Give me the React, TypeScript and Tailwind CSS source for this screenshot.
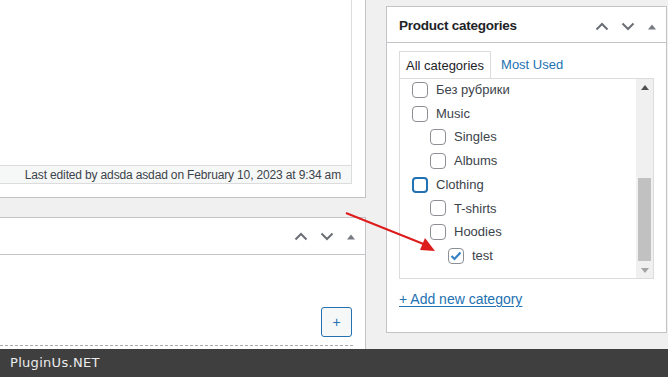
import React from 'react';

const font = { fontFamily: '"Liberation Sans", Arial, sans-serif' };

function Chevron({ down = false }: { down?: boolean }) {
  return (
    <svg width="14" height="9" viewBox="0 0 14 9" className="block">
      <path
        d={down ? 'M1.5 1.5 L7 7 L12.5 1.5' : 'M1.5 7.5 L7 2 L12.5 7.5'}
        fill="none"
        stroke="#6b6f75"
        strokeWidth="2"
      />
    </svg>
  );
}

function Tri() {
  return (
    <svg width="10" height="7" viewBox="0 0 10 7" className="block">
      <path d="M1 6.5 L5 1.5 L9 6.5 Z" fill="#787c82" />
    </svg>
  );
}

function Controls() {
  return (
    <div className="flex items-center gap-[12px]">
      <Chevron />
      <Chevron down />
      <Tri />
    </div>
  );
}

type Cat = { name: string; level: number; focus?: boolean; checked?: boolean };

const cats: Cat[] = [
  { name: 'Без рубрики', level: 0 },
  { name: 'Music', level: 0 },
  { name: 'Singles', level: 1 },
  { name: 'Albums', level: 1 },
  { name: 'Clothing', level: 0, focus: true },
  { name: 'T-shirts', level: 1 },
  { name: 'Hoodies', level: 1 },
  { name: 'test', level: 2, checked: true },
];

const indent = ['pl-[12px]', 'pl-[30px]', 'pl-[48px]'];

function CheckRow({ c }: { c: Cat }) {
  return (
    <div className={`flex items-center h-[23.7px] ${indent[c.level]}`}>
      <span
        className={`w-[16px] h-[16px] rounded-[4px] bg-white flex items-center justify-center shrink-0 ${
          c.focus ? 'border-2 border-[#2271b1]' : 'border border-[#8c8f94]'
        }`}
      >
        {c.checked && (
          <svg width="12" height="10" viewBox="0 0 12 10">
            <path d="M1.5 5 L4.5 8 L10.5 1.5" fill="none" stroke="#3582c4" strokeWidth="2.2" />
          </svg>
        )}
      </span>
      <span className="ml-[8px] text-[13px] text-[#3c434a]">{c.name}</span>
    </div>
  );
}

export default function App() {
  return (
    <div className="relative w-[668px] h-[377px] bg-[#f0f0f1] overflow-hidden flex flex-col" style={font}>
      <div className="flex flex-1 min-h-0">
        {/* Left column */}
        <div className="w-[366px] flex flex-col">
          <div className="bg-white border-r border-b border-[#c3c4c7] pr-[13px] pb-[13px]">
            <div className="h-[184px] border-r border-b border-[#dcdcde] flex flex-col">
              <div className="flex-1" />
              <div className="h-[18px] bg-[#f6f7f7] border-t border-[#dcdcde] flex items-center justify-end pr-[10px] text-[12px] tracking-[-0.15px] whitespace-nowrap text-[#3c434a]">
                Last edited by adsda asdad on February 10, 2023 at 9:34 am
              </div>
            </div>
          </div>

          <div className="mt-[19px] flex-1 bg-white border-t border-r border-[#c3c4c7] flex flex-col">
            <div className="h-[37px] border-b border-[#c3c4c7] flex items-center justify-end pr-[9px]">
              <Controls />
            </div>
            <div className="flex-1 flex flex-col justify-end">
              <div className="flex justify-end pr-[13px] pb-[8px]">
                <div className="w-[31px] h-[30px] rounded-[3px] border border-[#2271b1] bg-[#f6f7f7] flex items-center justify-center text-[#2271b1] text-[14px]">
                  +
                </div>
              </div>
              <div className="w-[353px] border-t border-dashed border-[#a7aaad] mb-[3px]" />
            </div>
          </div>
        </div>

        {/* Right column */}
        <div className="ml-[20px] w-[281px] pt-[6px]">
          <div className="bg-white border border-[#c3c4c7]">
            <div className="h-[36px] border-b border-[#c3c4c7] flex items-center justify-between pl-[12px] pr-[9px] pt-[3px]">
              <span className="text-[13.5px] tracking-[-0.25px] font-bold text-[#1d2327]">Product categories</span>
              <Controls />
            </div>
            <div className="px-[12px] pt-[8px] pb-[22px]">
              <div className="flex items-end h-[27px]">
                <div className="h-[27px] px-[6px] pt-[1px] border border-b-0 border-[#dcdcde] bg-white flex items-center text-[13px] text-[#1d2327]">
                  All categories
                </div>
                <div className="ml-[10px] h-[27px] pt-[1px] flex items-center text-[13px] text-[#2271b1]">Most Used</div>
              </div>
              <div className="h-[201px] border border-[#dcdcde] flex overflow-hidden">
                <div className="flex-1 -mt-[1px]">
                  {cats.map((c) => (
                    <CheckRow key={c.name} c={c} />
                  ))}
                </div>
                <div className="w-[17px] bg-[#f0f0f0] flex flex-col items-center">
                  <div className="h-[17px] flex items-center justify-center">
                    <svg width="8" height="5" viewBox="0 0 8 5">
                      <path d="M0 5 L4 0 L8 5 Z" fill="#505050" />
                    </svg>
                  </div>
                  <div className="flex-1 w-full flex flex-col justify-end pb-[1px]">
                    <div className="h-[83px] mx-[2px] bg-[#c1c1c1]" />
                  </div>
                  <div className="h-[16px] flex items-center justify-center">
                    <svg width="8" height="5" viewBox="0 0 8 5">
                      <path d="M0 0 L4 5 L8 0 Z" fill="#a3a3a3" />
                    </svg>
                  </div>
                </div>
              </div>
              <div className="mt-[10px] text-[14px] text-[#2271b1] underline underline-offset-2">+ Add new category</div>
            </div>
          </div>
        </div>
      </div>

      <div className="h-[28px] bg-[#3f3f3f] flex items-center pl-[10px] text-[13px] tracking-[0.3px] text-[#ececec]" style={{ fontFamily: '"DejaVu Sans", sans-serif' }}>
        PluginUs.NET
      </div>

      {/* Annotation arrow */}
      <svg className="absolute left-0 top-0 pointer-events-none" width="668" height="377">
        <line x1="346" y1="213" x2="426" y2="245" stroke="#dd1c1c" strokeWidth="2" />
        <path d="M435 251 L420 250 L425 238 Z" fill="#dd1c1c" />
      </svg>
    </div>
  );
}
